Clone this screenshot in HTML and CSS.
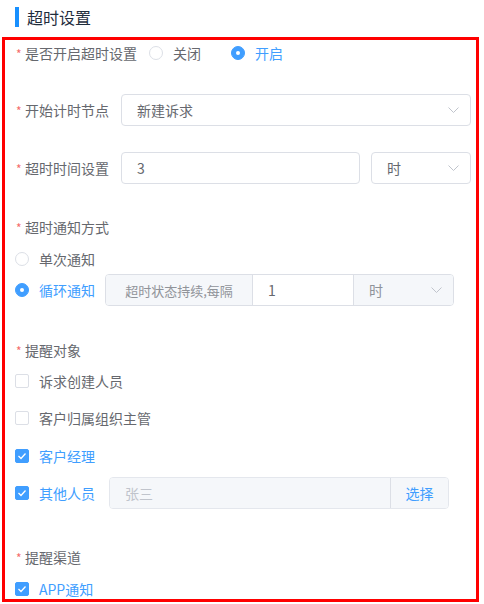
FILE: index.html
```html
<!DOCTYPE html>
<html lang="zh-CN">
<head>
    <meta charset="UTF-8">
    <meta name="viewport" content="width=device-width, initial-scale=1.0">
    <title>超时设置</title>
    <link rel="stylesheet" href="styles.css">
</head>
<body>
    <div class="page">
        <div class="section-title">超时设置</div>

        <div class="form-box">
            <!-- 是否开启 -->
            <div class="form-item item-switch">
                <label class="form-label"><span class="req">*</span>是否开启超时设置</label>
                <span class="radio"><span class="radio-dot"></span><span class="radio-text">关闭</span></span>
                <span class="radio checked"><span class="radio-dot"></span><span class="radio-text">开启</span></span>
            </div>

            <!-- 开始计时节点 -->
            <div class="form-item item-start">
                <label class="form-label"><span class="req">*</span>开始计时节点</label>
                <div class="select grow">
                    <span class="select-value">新建诉求</span>
                    <svg class="chevron" width="11" height="6" viewBox="0 0 11 6"><polyline points="0.5,0.5 5.5,5.5 10.5,0.5" fill="none" stroke="#c0c4cc" stroke-width="1"/></svg>
                </div>
            </div>

            <!-- 超时时间设置 -->
            <div class="form-item item-time">
                <label class="form-label"><span class="req">*</span>超时时间设置</label>
                <div class="input grow">3</div>
                <div class="select unit-select">
                    <span class="select-value">时</span>
                    <svg class="chevron" width="11" height="6" viewBox="0 0 11 6"><polyline points="0.5,0.5 5.5,5.5 10.5,0.5" fill="none" stroke="#c0c4cc" stroke-width="1"/></svg>
                </div>
            </div>

            <!-- 超时通知方式 -->
            <div class="block-label label-notify"><span class="req">*</span>超时通知方式</div>
            <div class="option-row opt-single">
                <span class="radio"><span class="radio-dot"></span><span class="radio-text">单次通知</span></span>
            </div>
            <div class="option-row opt-loop">
                <span class="radio checked"><span class="radio-dot"></span><span class="radio-text">循环通知</span></span>
                <div class="input-group loop-group">
                    <div class="group-prepend">超时状态持续,每隔</div>
                    <div class="group-input">1</div>
                    <div class="group-append">
                        <span>时</span>
                        <svg class="chevron" width="11" height="6" viewBox="0 0 11 6"><polyline points="0.5,0.5 5.5,5.5 10.5,0.5" fill="none" stroke="#c0c4cc" stroke-width="1"/></svg>
                    </div>
                </div>
            </div>

            <!-- 提醒对象 -->
            <div class="block-label label-target"><span class="req">*</span>提醒对象</div>
            <div class="option-row cb-1">
                <span class="checkbox"><span class="check-box"></span><span class="check-text">诉求创建人员</span></span>
            </div>
            <div class="option-row cb-2">
                <span class="checkbox"><span class="check-box"></span><span class="check-text">客户归属组织主管</span></span>
            </div>
            <div class="option-row cb-3">
                <span class="checkbox checked"><span class="check-box"><svg width="10" height="8" viewBox="0 0 10 8"><polyline points="1.5,4 4,6.5 8.5,1.5" fill="none" stroke="#fff" stroke-width="1.3"/></svg></span><span class="check-text">客户经理</span></span>
            </div>
            <div class="option-row cb-4">
                <span class="checkbox checked"><span class="check-box"><svg width="10" height="8" viewBox="0 0 10 8"><polyline points="1.5,4 4,6.5 8.5,1.5" fill="none" stroke="#fff" stroke-width="1.3"/></svg></span><span class="check-text">其他人员</span></span>
                <div class="input-group person-group">
                    <div class="group-input disabled">张三</div>
                    <div class="group-button">选择</div>
                </div>
            </div>

            <!-- 提醒渠道 -->
            <div class="block-label label-channel"><span class="req">*</span>提醒渠道</div>
            <div class="option-row cb-app">
                <span class="checkbox checked"><span class="check-box"><svg width="10" height="8" viewBox="0 0 10 8"><polyline points="1.5,4 4,6.5 8.5,1.5" fill="none" stroke="#fff" stroke-width="1.3"/></svg></span><span class="check-text">APP通知</span></span>
            </div>
        </div>
    </div>
</body>
</html>
```
FILE: styles.css
```css
body {
    margin: 0;
    font-family: "Noto Sans CJK SC", "Noto Sans", sans-serif;
    font-size: 14px;
    color: #66686e;
    background: #fff;
}
.page {
    padding-top: 7px;
}
.section-title {
    margin-left: 15px;
    height: 20px;
    line-height: 20px;
    border-left: 4px solid #1890ff;
    padding-left: 8px;
    font-size: 16px;
    color: #1f2d3d;
    margin-bottom: 10px;
}
.form-box {
    margin-left: 2px;
    width: 477px;
    height: 565px;
    box-sizing: border-box;
    border: 3px solid #ff0000;
    padding: 0 5px 0 10px;
    overflow: hidden;
}
.req {
    display: inline-block;
    width: 9px;
    margin-left: 1px;
    color: #f56c6c;
    font-size: 12px;
    line-height: 12px;
    vertical-align: middle;
    position: relative;
    top: -1px;
}
.form-item {
    display: flex;
    align-items: center;
}
.form-label {
    padding-right: 12px;
    white-space: nowrap;
}
.item-switch {
    height: 26px;
}
.item-start {
    margin-top: 28px;
}
.item-time {
    margin-top: 26px;
}
.grow {
    flex: 1;
}
.input,
.select {
    height: 32px;
    box-sizing: border-box;
    border: 1px solid #dcdfe6;
    border-radius: 4px;
    padding: 0 15px;
    display: flex;
    align-items: center;
    color: #66686e;
}
.select {
    justify-content: space-between;
}
.unit-select {
    width: 100px;
    margin-left: 11px;
}
.chevron {
    display: block;
    margin-right: -4px;
}

/* radio */
.radio {
    display: inline-flex;
    align-items: center;
    margin-right: 30px;
    white-space: nowrap;
}
.radio-dot {
    width: 14px;
    height: 14px;
    box-sizing: border-box;
    border: 1px solid #dcdfe6;
    border-radius: 50%;
    margin-right: 10px;
    position: relative;
}
.radio.checked .radio-dot {
    background: #409eff;
    border-color: #409eff;
}
.radio.checked .radio-dot::after {
    content: "";
    position: absolute;
    width: 4px;
    height: 4px;
    border-radius: 50%;
    background: #fff;
    left: 4px;
    top: 4px;
}
.radio.checked .radio-text {
    color: #409eff;
}

/* checkbox */
.checkbox {
    display: inline-flex;
    align-items: center;
    white-space: nowrap;
}
.check-box {
    width: 14px;
    height: 14px;
    box-sizing: border-box;
    border: 1px solid #dcdfe6;
    border-radius: 2px;
    margin-right: 10px;
    display: flex;
    align-items: center;
    justify-content: center;
}
.checkbox.checked .check-box {
    background: #409eff;
    border-color: #409eff;
}
.checkbox.checked .check-text {
    color: #409eff;
}

.block-label {
    height: 24px;
    line-height: 24px;
}
.option-row {
    display: flex;
    align-items: center;
    height: 24px;
}
.label-notify {
    margin-top: 31px;
}
.opt-single {
    margin-top: 8px;
}
.opt-loop {
    margin-top: 3px;
    height: 32px;
}
.opt-loop .radio {
    margin-right: 10px;
}
.label-target {
    margin-top: 32px;
}
.cb-1 {
    margin-top: 7px;
}
.cb-2 {
    margin-top: 13px;
}
.cb-3 {
    margin-top: 14px;
}
.cb-4 {
    margin-top: 9px;
    height: 32px;
}
.label-channel {
    margin-top: 36px;
}
.cb-app {
    margin-top: 8px;
}

/* grouped inputs */
.input-group {
    display: flex;
    height: 32px;
    box-sizing: border-box;
    border: 1px solid #dcdfe6;
    border-radius: 4px;
    overflow: hidden;
}
.loop-group {
    width: 349px;
}
.group-prepend {
    width: 147px;
    box-sizing: border-box;
    background: #f5f7fa;
    color: #909399;
    font-size: 13px;
    border-right: 1px solid #dcdfe6;
    display: flex;
    align-items: center;
    justify-content: center;
    white-space: nowrap;
}
.group-input {
    flex: 1;
    padding: 0 15px;
    display: flex;
    align-items: center;
    color: #66686e;
}
.group-append {
    width: 100px;
    box-sizing: border-box;
    background: #f5f7fa;
    border-left: 1px solid #dcdfe6;
    padding: 0 15px;
    display: flex;
    align-items: center;
    justify-content: space-between;
    color: #909399;
}
.person-group {
    width: 340px;
    margin-left: 14px;
    border-color: #e4e7ed;
}
.group-input.disabled {
    background: #f5f7fa;
    color: #c0c4cc;
}
.group-button {
    width: 57px;
    background: #f5f7fa;
    border-left: 1px solid #dcdfe6;
    color: #409eff;
    display: flex;
    align-items: center;
    justify-content: center;
}
```
